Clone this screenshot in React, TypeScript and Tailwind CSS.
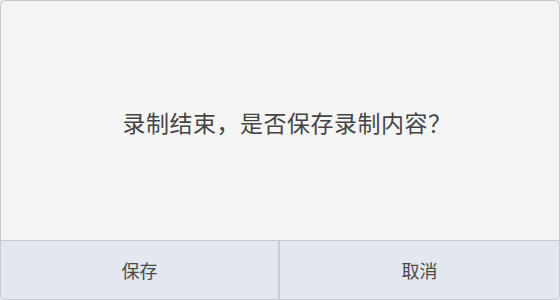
export default function App() {
  return (
    <div className="w-[560px] h-[300px] bg-[#dfe9f3]">
      <div
        className="w-full h-full flex flex-col bg-[#f5f5f5] border border-[#c6c8cc] rounded-[6px] overflow-hidden text-[#444444]"
        style={{ fontFamily: '"Noto Sans CJK SC", "Noto Sans", sans-serif' }}
      >
        {/* message */}
        <div className="flex-1 flex items-center justify-center pt-1 pl-[14px]">
          <p className="text-[23px] leading-none tracking-[0.5px]">录制结束，是否保存录制内容？</p>
        </div>

        {/* actions */}
        <div className="h-[59px] grid grid-cols-2 border-t border-[#c6c8cc] bg-[#e3e7ef]">
          <button className="flex items-center justify-center text-[18px] text-[#4a4a4a] border-r-2 border-[#c9ccd3]">
            保存
          </button>
          <button className="flex items-center justify-center text-[18px] text-[#4a4a4a]">
            取消
          </button>
        </div>
      </div>
    </div>
  )
}
